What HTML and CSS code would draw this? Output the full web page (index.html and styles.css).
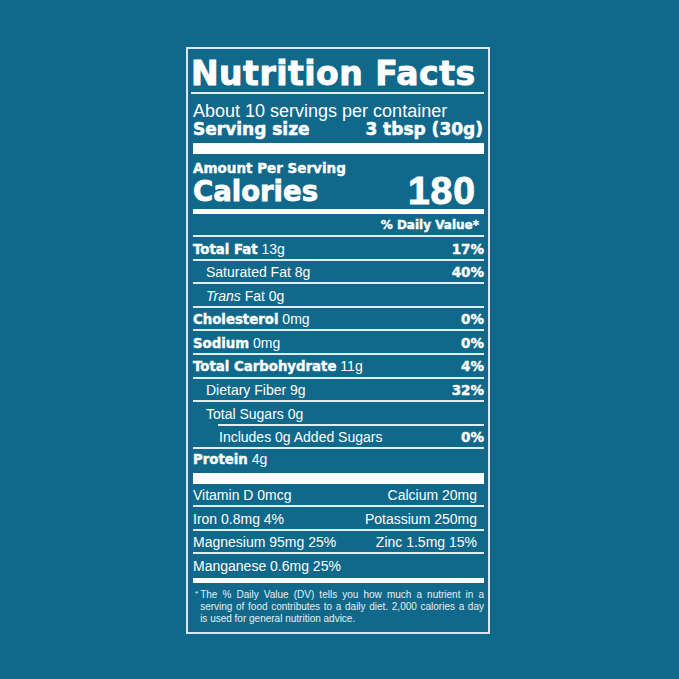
FILE: index.html
```html
<!DOCTYPE html>
<html lang="en">
<head>
<meta charset="utf-8">
<title>Nutrition Facts</title>
<link rel="stylesheet" href="styles.css">
</head>
<body>
<div class="page">
  <section class="label">
    <h1 class="title">Nutrition Facts</h1>
    <div class="serving">
      <p class="servings">About 10 servings per container</p>
      <p class="serving-size"><span>Serving size</span><span>3 tbsp (30g)</span></p>
    </div>
    <div class="calories-block">
      <p class="amount">Amount Per Serving</p>
      <p class="calories"><span class="cal-label">Calories</span><span class="cal-value">180</span></p>
    </div>
    <p class="dv-head">% Daily Value*</p>
    <ul class="nutrients">
      <li class="row"><span><b>Total Fat</b> 13g</span><b class="pct">17%</b></li>
      <li class="row sub"><span>Saturated Fat 8g</span><b class="pct">40%</b></li>
      <li class="row sub"><span><i>Trans</i> Fat 0g</span></li>
      <li class="row"><span><b>Cholesterol</b> 0mg</span><b class="pct">0%</b></li>
      <li class="row"><span><b>Sodium</b> 0mg</span><b class="pct">0%</b></li>
      <li class="row"><span><b>Total Carbohydrate</b> 11g</span><b class="pct">4%</b></li>
      <li class="row sub"><span>Dietary Fiber 9g</span><b class="pct">32%</b></li>
      <li class="row sub sugars"><span>Total Sugars 0g</span></li>
      <li class="row subsub"><span>Includes 0g Added Sugars</span><b class="pct">0%</b></li>
      <li class="row protein"><span><b>Protein</b> 4g</span></li>
    </ul>
    <ul class="minerals">
      <li class="row"><span>Vitamin D 0mcg</span><span>Calcium 20mg</span></li>
      <li class="row"><span>Iron 0.8mg 4%</span><span>Potassium 250mg</span></li>
      <li class="row"><span>Magnesium 95mg 25%</span><span>Zinc 1.5mg 15%</span></li>
      <li class="row last"><span>Manganese 0.6mg 25%</span></li>
    </ul>
    <div class="footnote">
      <span class="star">*</span>
      <p class="foot-text">
        <span class="fl">The % Daily Value (DV) tells you how much a nutrient in a</span>
        <span class="fl">serving of food contributes to a daily diet. 2,000 calories a day</span>
        <span class="fl fl-last">is used for general nutrition advice.</span>
      </p>
    </div>
  </section>
</div>
</body>
</html>
```

FILE: styles.css
```css
* {
  box-sizing: border-box;
  margin: 0;
  padding: 0;
}

html,
body {
  background: #10698b;
}

body {
  font-family: "Liberation Sans", Arial, sans-serif;
  color: #ffffff;
}

.page {
  padding: 47px 0 0 186px;
}

.label {
  width: 304px;
  border: 2px solid #d9e8ef;
  padding: 0 4px 0 5px;
}

.title {
  font-family: "DejaVu Sans", sans-serif;
  font-weight: bold;
  font-size: 33px;
  line-height: 37px;
  letter-spacing: 0.5px;
  padding-top: 6px;
  margin-left: -2px;
  white-space: nowrap;
  -webkit-text-stroke: 0.9px #ffffff;
  border-bottom: 2px solid #e2edf2;
}

.serving {
  padding: 7.5px 0 5.5px;
  border-bottom: 11px solid #ffffff;
}

.servings {
  font-size: 18px;
  line-height: 18px;
  white-space: nowrap;
}

.serving-size {
  display: flex;
  justify-content: space-between;
  font-family: "DejaVu Sans", sans-serif;
  font-weight: bold;
  font-size: 17px;
  line-height: 18px;
  padding-right: 1px;
  white-space: nowrap;
  -webkit-text-stroke: 0.5px #ffffff;
}

.calories-block {
  padding-top: 6px;
  border-bottom: 5px solid #ffffff;
}

.amount {
  font-family: "DejaVu Sans", sans-serif;
  font-weight: bold;
  font-size: 13.5px;
  line-height: 16px;
  -webkit-text-stroke: 0.4px #ffffff;
}

.calories {
  display: flex;
  justify-content: space-between;
  align-items: flex-start;
  height: 33px;
}

.cal-label {
  font-family: "DejaVu Sans", sans-serif;
  font-weight: bold;
  font-size: 27.5px;
  line-height: 30px;
  -webkit-text-stroke: 0.8px #ffffff;
}

.cal-value {
  font-family: "Liberation Sans", Arial, sans-serif;
  font-weight: bold;
  font-size: 39px;
  line-height: 30px;
  letter-spacing: 1px;
  margin-right: 8px;
  -webkit-text-stroke: 1px #ffffff;
}

.dv-head {
  font-family: "DejaVu Sans", sans-serif;
  font-weight: bold;
  font-size: 12px;
  line-height: 19px;
  padding: 2px 5px 0 0;
  text-align: right;
  -webkit-text-stroke: 0.4px #ffffff;
  border-bottom: 2px solid #e2edf2;
}

.nutrients,
.minerals {
  list-style: none;
}

.row {
  display: flex;
  justify-content: space-between;
  height: 23.6px;
  padding-top: 1.5px;
  font-size: 14px;
  line-height: 20px;
  white-space: nowrap;
  border-bottom: 2px solid #e2edf2;
}

.row b {
  font-family: "DejaVu Sans", sans-serif;
  font-weight: bold;
  font-size: 13.3px;
  -webkit-text-stroke: 0.4px #ffffff;
}

.row .pct {
  font-size: 13.5px;
}

.row i {
  font-style: italic;
}

.sub {
  padding-left: 13px;
}

.subsub {
  padding-left: 26px;
}

.sugars {
  border-bottom: none;
  background: linear-gradient(#e2edf2, #e2edf2) no-repeat right bottom / calc(100% - 25px) 2px;
}

.protein {
  height: 34.6px;
  padding-top: 0;
  border-bottom: 11px solid #ffffff;
}

.minerals .row {
  height: 23.5px;
  padding-right: 7px;
}

.minerals .last {
  height: 28.5px;
  border-bottom: 5px solid #ffffff;
}

.footnote {
  display: flex;
  align-items: flex-start;
  padding: 5.7px 0 6.7px 2px;
  font-size: 10px;
  line-height: 12.2px;
  color: #e6eef2;
}

.star {
  font-size: 8px;
  line-height: 10px;
  margin-right: 2px;
}

.foot-text {
  flex: 1;
}

.fl {
  display: block;
  text-align: justify;
  text-align-last: justify;
}

.fl-last {
  text-align-last: left;
}
```
